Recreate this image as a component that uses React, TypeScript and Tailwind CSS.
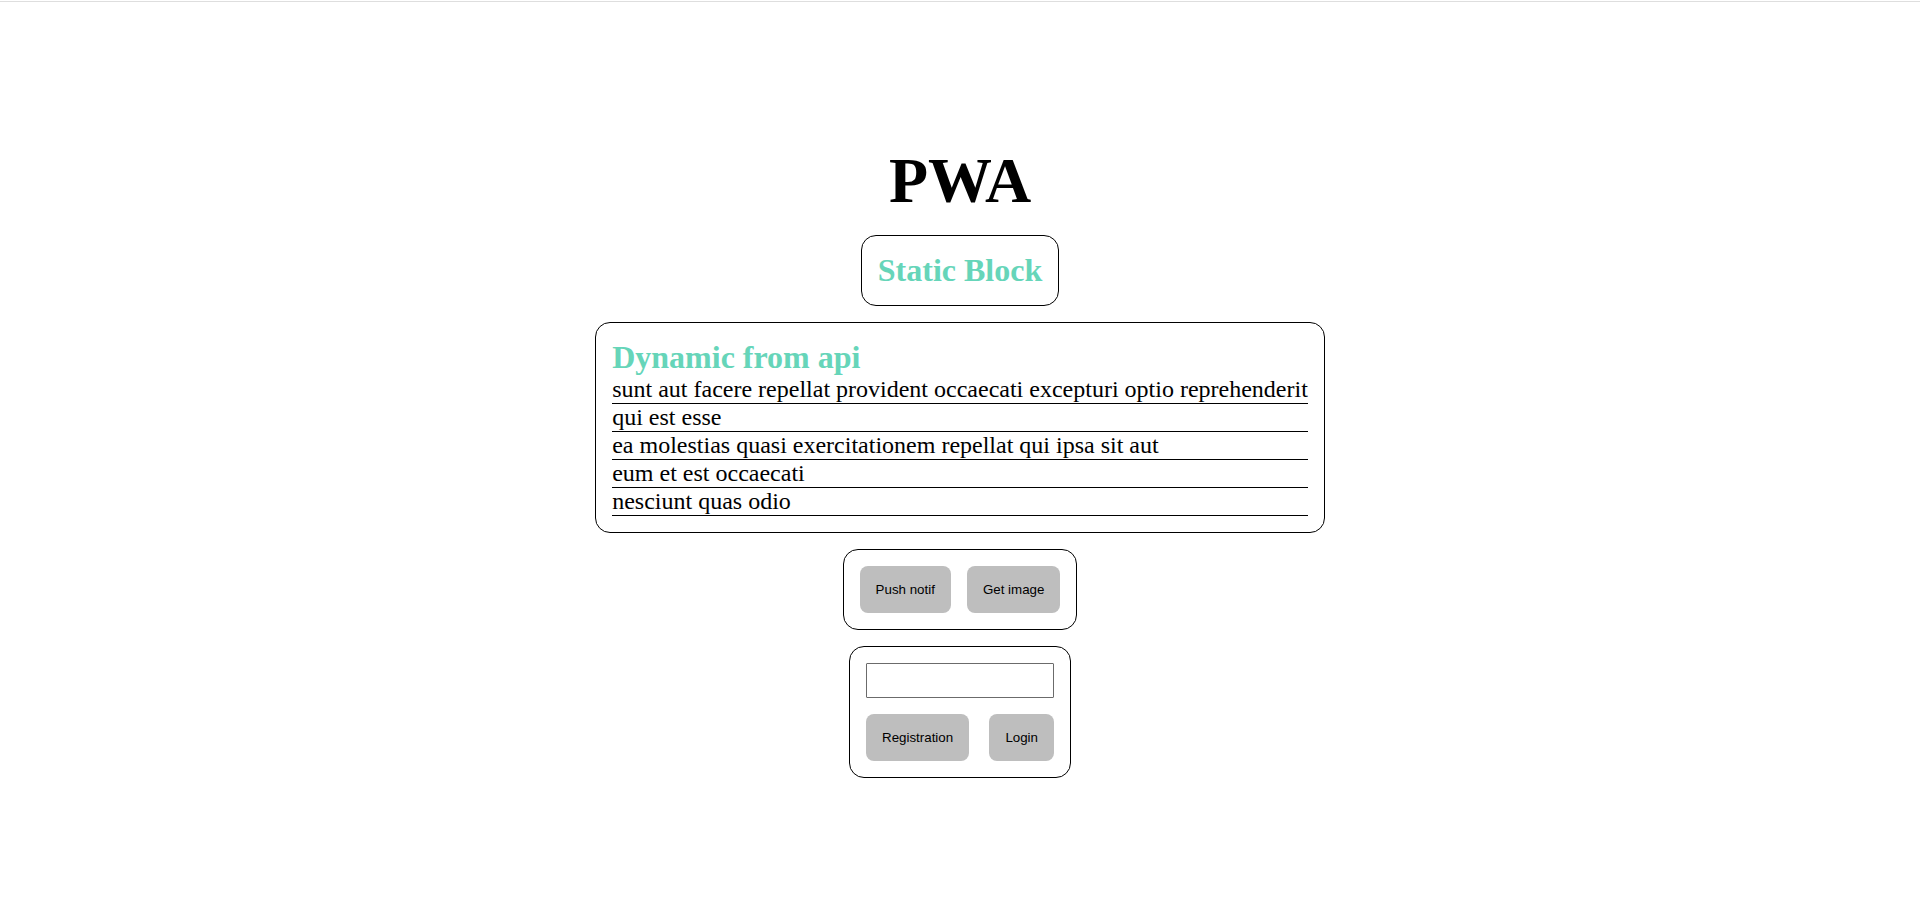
const posts = [
  "sunt aut facere repellat provident occaecati excepturi optio reprehenderit",
  "qui est esse",
  "ea molestias quasi exercitationem repellat qui ipsa sit aut",
  "eum et est occaecati",
  "nesciunt quas odio",
];

function Button({ label }: { label: string }) {
  return (
    <button
      type="button"
      className="h-[47px] rounded-lg bg-[#bebebe] px-4 font-['Liberation_Sans',Arial,sans-serif] text-[13.333px] leading-[15px] text-black"
    >
      {label}
    </button>
  );
}

export default function App() {
  return (
    <div className="min-h-screen bg-white font-['Liberation_Serif','Times_New_Roman',serif] text-black">
      <div className="pt-px">
        <div className="h-px bg-[#dedede]" />
      </div>

      <main className="flex flex-col items-center pt-[147px]">
        <h1 className="text-[64px] font-bold leading-[64px]">PWA</h1>

        <h2 className="mt-[22px] rounded-[15px] border border-black p-4 text-[32px] font-bold leading-[37px] text-[#66d5b9]">
          Static Block
        </h2>

        <section className="mt-4 rounded-[15px] border border-black p-4">
          <h2 className="text-[32px] font-bold leading-[37px] text-[#66d5b9]">
            Dynamic from api
          </h2>
          <ul>
            {posts.map((title) => (
              <li
                key={title}
                className="border-b border-black text-[24px] leading-[27px] whitespace-nowrap"
              >
                {title}
              </li>
            ))}
          </ul>
        </section>

        <div className="mt-4 flex gap-4 rounded-[15px] border border-black p-4">
          <Button label="Push notif" />
          <Button label="Get image" />
        </div>

        <div className="mt-4 flex w-[222px] flex-col gap-4 rounded-[15px] border border-black p-4">
          <input
            type="text"
            className="h-[35px] w-full rounded-[1px] border border-[#6b6b6b] px-2 font-['Liberation_Sans',Arial,sans-serif] text-[13.333px] outline-none"
          />
          <div className="flex justify-between">
            <Button label="Registration" />
            <Button label="Login" />
          </div>
        </div>
      </main>
    </div>
  );
}
